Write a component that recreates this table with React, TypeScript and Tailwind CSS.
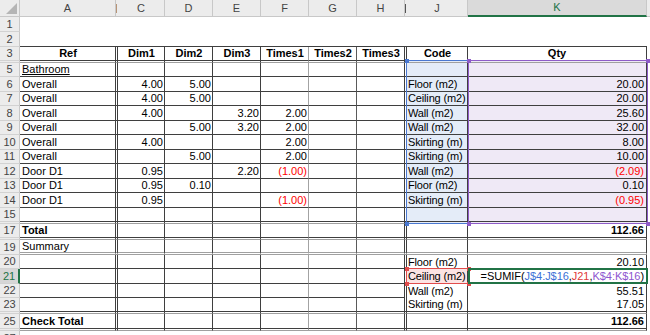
import clsx from 'clsx'
import type { ReactNode } from 'react'

type Cell = { t: ReactNode; b?: boolean; red?: boolean; u?: boolean; al?: 'l' | 'r' | 'c' }
type Row = {
  n: string
  h: string
  kind: 'top' | 'grid' | 'hidden'
  bottom: 'none' | 'dark' | 'gray' | 'double' | 'part'
  cells?: Record<string, Cell>
  sel?: boolean
  active?: boolean
}

const COLS = [
  { id: 'A', w: 'w-[96px]', line: 'border-r-[#3f3f3f]', al: 'l', pad: 'pl-[2px] pr-[1px]' },
  { id: 'B', w: 'w-[2px]', line: 'border-r-[#3f3f3f]', al: 'r', pad: '' },
  { id: 'C', w: 'w-[47px]', line: 'border-r-[#3f3f3f]', al: 'r', pad: 'pl-[2px] pr-[1px]' },
  { id: 'D', w: 'w-[48px]', line: 'border-r-[#3f3f3f]', al: 'r', pad: 'pl-[2px] pr-[1px]' },
  { id: 'E', w: 'w-[48px]', line: 'border-r-[#3f3f3f]', al: 'r', pad: 'pl-[2px] pr-[1px]' },
  { id: 'F', w: 'w-[48px]', line: 'border-r-[#a3a3a3]', al: 'r', pad: 'pl-[2px] pr-[1px]' },
  { id: 'G', w: 'w-[48px]', line: 'border-r-[#5a5a5a]', al: 'r', pad: 'pl-[2px] pr-[1px]' },
  { id: 'H', w: 'w-[48px]', line: 'border-r-[#3f3f3f]', al: 'r', pad: 'pl-[2px] pr-[1px]' },
  { id: 'I', w: 'w-[2px]', line: 'border-r-[#3f3f3f]', al: 'r', pad: '' },
  { id: 'J', w: 'w-[61px]', line: 'border-r-[#3f3f3f]', al: 'l', pad: 'pl-[1px] pr-0 tracking-[-0.15px]' },
  { id: 'K', w: 'w-[179px]', line: 'border-r-[#3f3f3f]', al: 'r', pad: 'pl-[2px] pr-[2px]' },
]

const narrow = (id: string) => id === 'B' || id === 'I'

const hd = (t: string): Cell => ({ t, b: true, al: 'c' })

// one line of the takeoff
const line = (n: string, h: string, a: string, c: string, d: string, e: string, f: string, j: string, k: string): Row => ({
  n,
  h,
  kind: 'grid',
  bottom: 'dark',
  sel: true,
  cells: {
    A: { t: a },
    C: { t: c },
    D: { t: d },
    E: { t: e },
    F: { t: f, red: f.startsWith('(') },
    J: { t: j },
    K: { t: k, red: k.startsWith('(') },
  },
})

const formula = (
  <span className="tracking-[-0.05px]">
    =SUMIF(<span className="text-[#3b6fd6]">J$4:J$16</span>,<span className="text-[#e03a3a]">J21</span>,
    <span className="text-[#8d55cf]">K$4:K$16</span>)
  </span>
)

const ROWS: Row[] = [
  { n: '1', h: 'h-[15px]', kind: 'top', bottom: 'none' },
  { n: '2', h: 'h-[15px]', kind: 'top', bottom: 'dark' },
  {
    n: '3',
    h: 'h-[14px]',
    kind: 'grid',
    bottom: 'dark',
    cells: { A: hd('Ref'), C: hd('Dim1'), D: hd('Dim2'), E: hd('Dim3'), F: hd('Times1'), G: hd('Times2'), H: hd('Times3'), J: hd('Code'), K: hd('Qty') },
  },
  { n: '', h: 'h-[2px]', kind: 'hidden', bottom: 'gray', sel: true },
  { n: '5', h: 'h-[14px]', kind: 'grid', bottom: 'dark', sel: true, cells: { A: { t: 'Bathroom', u: true } } },
  line('6', 'h-[15px]', 'Overall', '4.00', '5.00', '', '', 'Floor (m2)', '20.00'),
  line('7', 'h-[14px]', 'Overall', '4.00', '5.00', '', '', 'Ceiling (m2)', '20.00'),
  line('8', 'h-[15px]', 'Overall', '4.00', '', '3.20', '2.00', 'Wall (m2)', '25.60'),
  line('9', 'h-[14px]', 'Overall', '', '5.00', '3.20', '2.00', 'Wall (m2)', '32.00'),
  line('10', 'h-[15px]', 'Overall', '4.00', '', '', '2.00', 'Skirting (m)', '8.00'),
  line('11', 'h-[14px]', 'Overall', '', '5.00', '', '2.00', 'Skirting (m)', '10.00'),
  line('12', 'h-[15px]', 'Door D1', '0.95', '', '2.20', '(1.00)', 'Wall (m2)', '(2.09)'),
  line('13', 'h-[14px]', 'Door D1', '0.95', '0.10', '', '', 'Floor (m2)', '0.10'),
  line('14', 'h-[15px]', 'Door D1', '0.95', '', '', '(1.00)', 'Skirting (m)', '(0.95)'),
  { n: '15', h: 'h-[14px]', kind: 'grid', bottom: 'dark', sel: true },
  { n: '', h: 'h-[2px]', kind: 'hidden', bottom: 'gray', sel: true },
  { n: '17', h: 'h-[14px]', kind: 'grid', bottom: 'dark', cells: { A: { t: 'Total', b: true }, K: { t: '112.66', b: true } } },
  { n: '', h: 'h-[2px]', kind: 'hidden', bottom: 'gray' },
  { n: '19', h: 'h-[15px]', kind: 'grid', bottom: 'double', cells: { A: { t: 'Summary' } } },
  { n: '20', h: 'h-[14px]', kind: 'grid', bottom: 'part', cells: { J: { t: 'Floor (m2)' }, K: { t: '20.10' } } },
  { n: '21', h: 'h-[15px]', kind: 'grid', bottom: 'part', active: true, cells: { J: { t: 'Ceiling (m2)' }, K: { t: formula } } },
  { n: '22', h: 'h-[14px]', kind: 'grid', bottom: 'part', cells: { J: { t: 'Wall (m2)' }, K: { t: '55.51' } } },
  { n: '23', h: 'h-[14px]', kind: 'grid', bottom: 'dark', cells: { J: { t: 'Skirting (m)' }, K: { t: '17.05' } } },
  { n: '', h: 'h-[2px]', kind: 'hidden', bottom: 'gray' },
  { n: '25', h: 'h-[15px]', kind: 'grid', bottom: 'dark', cells: { A: { t: 'Check Total', b: true }, K: { t: '112.66', b: true } } },
  { n: '', h: 'h-[2px]', kind: 'hidden', bottom: 'gray' },
  { n: '27', h: 'h-[15px]', kind: 'top', bottom: 'none' },
]

function bottomLine(row: Row, ci: number) {
  switch (row.bottom) {
    case 'dark':
      return 'border-b border-b-[#3f3f3f]'
    case 'gray':
      return 'border-b border-b-[#a0a0a0]'
    case 'double':
      return 'border-b-[3px] border-double border-b-[#a0a0a0]'
    case 'part':
      return ci <= 7 ? 'border-b border-b-[#3f3f3f]' : ''
    default:
      return ''
  }
}

function fill(row: Row, id: string) {
  if (row.sel && id === 'J') return 'bg-[#e4ecf8]'
  if (row.sel && id === 'K') return 'bg-[#efe9f6]'
  if (row.active && id === 'J') return 'bg-[#fbe3e3]'
  return ''
}

function Handle({ pos, color }: { pos: string; color: string }) {
  return <div className={clsx('absolute h-[4px] w-[4px]', pos, color)} />
}

function Corners({ color }: { color: string }) {
  return (
    <>
      <Handle pos="-left-[2.5px] -top-[2.5px]" color={color} />
      <Handle pos="-right-[2.5px] -top-[2.5px]" color={color} />
      <Handle pos="-left-[2.5px] -bottom-[2.5px]" color={color} />
      <Handle pos="-right-[2.5px] -bottom-[2.5px]" color={color} />
    </>
  )
}

function ColumnHeader() {
  return (
    <div className="flex h-[17px]">
      <div className="relative w-[20px] shrink-0 border-b border-r border-[#c8c8c8] bg-[#ececec]">
        <svg className="absolute bottom-[2px] right-[2px]" width="11" height="11" viewBox="0 0 11 11">
          <polygon points="11,0 11,11 0,11" fill="#b5b5b5" />
        </svg>
      </div>
      {COLS.map(c =>
        narrow(c.id) ? (
          <div key={c.id} className={clsx('flex shrink-0 items-center border-b border-[#c8c8c8] bg-[#ececec]', c.w)}>
            <div className={clsx('h-[9px] w-[1px]', c.id === 'B' ? 'bg-[#b79477]' : 'bg-[#555]')} />
          </div>
        ) : (
          <div
            key={c.id}
            className={clsx(
              'flex shrink-0 items-center justify-center border-r border-r-[#c8c8c8] text-[11px]',
              c.w,
              c.id === 'K'
                ? 'border-b-2 border-b-[#217346] bg-[#dadada] text-[#217346]'
                : 'border-b border-b-[#c8c8c8] bg-[#ececec] text-[#444]'
            )}
          >
            {c.id}
          </div>
        )
      )}
      <div className="flex-1 border-b border-[#c8c8c8] bg-[#ececec]" />
    </div>
  )
}

function SheetRow({ row }: { row: Row }) {
  return (
    <div className={clsx('flex', row.h)}>
      <div
        className={clsx(
          'flex w-[20px] shrink-0 items-center justify-center border-b border-b-[#d2d2d2] text-[11px] leading-none',
          row.active ? 'border-r-2 border-r-[#217346] bg-[#d6d6d6] text-[#217346]' : 'border-r border-r-[#c8c8c8] bg-[#ececec] text-[#444]'
        )}
      >
        {row.n}
      </div>
      {COLS.map((c, ci) => {
        const cell = row.cells?.[c.id]
        const al = cell?.al ?? c.al
        return (
          <div
            key={c.id}
            className={clsx(
              'flex h-full shrink-0 items-center overflow-hidden whitespace-nowrap text-[11px] leading-none',
              c.w,
              c.pad,
              row.kind !== 'top' && ['border-r', c.line],
              bottomLine(row, ci),
              fill(row, c.id),
              al === 'l' && 'justify-start',
              al === 'r' && 'justify-end',
              al === 'c' && 'justify-center'
            )}
          >
            {cell && (
              <span className={clsx(cell.b && 'font-bold', cell.u && 'underline', cell.red ? 'text-[#ff0000]' : 'text-black')}>
                {cell.t}
              </span>
            )}
          </div>
        )
      })}
      <div className="flex-1" />
    </div>
  )
}

export default function App() {
  return (
    <div className="relative h-[335px] w-[650px] overflow-hidden bg-white font-['Liberation_Sans',Arial,sans-serif]">
      <ColumnHeader />
      {ROWS.map((r, i) => (
        <SheetRow key={i} row={r} />
      ))}

      {/* range highlights from the formula being edited */}
      <div className="absolute left-[406px] top-[60px] h-[164px] w-[63px] border border-[#4a78d0]">
        <Corners color="bg-[#4a78d0]" />
      </div>
      <div className="absolute left-[468px] top-[60px] h-[164px] w-[180px] border border-[#8e5cc8]">
        <Corners color="bg-[#8e5cc8]" />
      </div>
      <div className="absolute left-[406px] top-[268px] h-[16px] w-[63px] border border-[#e14c4c]">
        <Corners color="bg-[#e14c4c]" />
      </div>
      <div className="absolute left-[468px] top-[268px] h-[16px] w-[180px] border-2 border-[#217346]" />
    </div>
  )
}
